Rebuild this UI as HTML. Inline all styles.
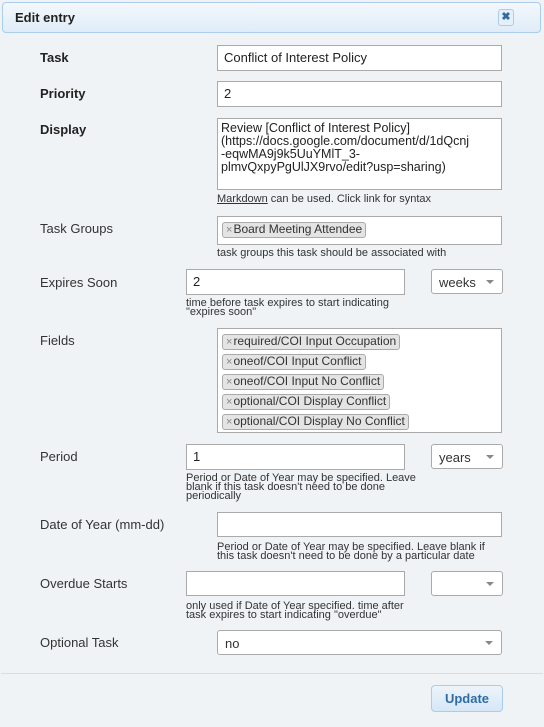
<!DOCTYPE html>
<html><head><style>
*{box-sizing:border-box;margin:0;padding:0}
body{width:544px;height:727px;background:#eff3f6;font-family:"Liberation Sans",sans-serif;font-size:13px;color:#333;position:relative;overflow:hidden}
.a{position:absolute}
.hdr{left:2px;top:2px;width:539px;height:31px;border:1px solid #a9cdea;border-radius:4px;background:linear-gradient(#f4f8fc,#dfecf8)}
.ttl{left:15px;top:10px;font-weight:bold;font-size:13px;color:#222}
.cls{left:498px;top:9px;width:16px;height:17px;border:1px solid #a9cdea;border-radius:3px;background:#e6f0fa;color:#2e6da4;font-size:11px;font-weight:bold;text-align:center;line-height:15px}
.lbl{left:40px;font-size:13px;color:#333}
.b{font-weight:bold;color:#222}
.in{background:#fff;border:1px solid #aaa;padding:4px 6px;font-size:13px;color:#222}
.sel{background:#fff;border:1px solid #aaa;border-radius:3px;padding:5px 7px;font-size:13px;color:#333}
.sel:after{content:"";position:absolute;right:8px;top:10px;border:4px solid transparent;border-top:4px solid #888}
.hint{font-size:11px;line-height:9px;color:#333}
.tag{display:table;height:15px;background:#e4e4e4;border:1px solid #aaa;border-radius:3px;font-size:12px;line-height:13px;padding:0 3px;margin-bottom:4px;color:#333;white-space:nowrap}
.tag i{font-style:normal;color:#888;font-size:11px;margin-right:1px}
</style></head><body>
<div class="a hdr"></div>
<div class="a ttl">Edit entry</div>
<div class="a cls">✖</div>

<div class="a lbl b" style="top:50px">Task</div>
<div class="a in" style="left:217px;top:45px;width:285px;height:26px">Conflict of Interest Policy</div>
<div class="a lbl b" style="top:86px">Priority</div>
<div class="a in" style="left:217px;top:81px;width:285px;height:26px">2</div>
<div class="a lbl b" style="top:122px">Display</div>
<div class="a in" style="left:217px;top:118px;width:285px;height:72px;line-height:13px;padding:3px 3px;font-size:12.5px">Review [Conflict of Interest Policy]<br>(https://docs.google.com/document/d/1dQcnj<br>-eqwMA9j9k5UuYMlT_3-<br>plmvQxpyPgUlJX9rvo/edit?usp=sharing)</div>
<div class="a hint" style="left:217px;top:195px"><u>Markdown</u> can be used. Click link for syntax</div>

<div class="a lbl" style="top:221px">Task Groups</div>
<div class="a in" style="left:217px;top:216px;width:285px;height:29px;padding:5px 4px"><span class="tag"><i>×</i>Board Meeting Attendee</span></div>
<div class="a hint" style="left:217px;top:249px">task groups this task should be associated with</div>

<div class="a lbl" style="top:275px">Expires Soon</div>
<div class="a in" style="left:186px;top:269px;width:219px;height:26px">2</div>
<div class="a sel" style="left:431px;top:269px;width:72px;height:25px">weeks</div>
<div class="a hint" style="left:186px;top:299px">time before task expires to start indicating<br>"expires soon"</div>

<div class="a lbl" style="top:333px">Fields</div>
<div class="a in" style="left:217px;top:328px;width:285px;height:105px;padding:5px 4px 0">
<span class="tag"><i>×</i>required/COI Input Occupation</span>
<span class="tag"><i>×</i>oneof/COI Input Conflict</span>
<span class="tag"><i>×</i>oneof/COI Input No Conflict</span>
<span class="tag"><i>×</i>optional/COI Display Conflict</span>
<span class="tag"><i>×</i>optional/COI Display No Conflict</span></div>

<div class="a lbl" style="top:449px">Period</div>
<div class="a in" style="left:186px;top:444px;width:219px;height:26px">1</div>
<div class="a sel" style="left:431px;top:444px;width:72px;height:25px">years</div>
<div class="a hint" style="left:186px;top:474px">Period or Date of Year may be specified. Leave<br>blank if this task doesn't need to be done<br>periodically</div>

<div class="a lbl" style="top:517px">Date of Year (mm-dd)</div>
<div class="a in" style="left:217px;top:512px;width:285px;height:25px"></div>
<div class="a hint" style="left:217px;top:543px">Period or Date of Year may be specified. Leave blank if<br>this task doesn't need to be done by a particular date</div>

<div class="a lbl" style="top:576px">Overdue Starts</div>
<div class="a in" style="left:186px;top:571px;width:219px;height:25px"></div>
<div class="a sel" style="left:431px;top:571px;width:72px;height:25px"></div>
<div class="a hint" style="left:186px;top:602px">only used if Date of Year specified. time after<br>task expires to start indicating "overdue"</div>

<div class="a lbl" style="top:635px">Optional Task</div>
<div class="a sel" style="left:217px;top:630px;width:285px;height:25px">no</div>

<div class="a" style="left:1px;top:673px;width:542px;height:1px;background:#d8dde2"></div>
<div class="a" style="left:431px;top:685px;width:72px;height:27px;border:1px solid #a9cdea;border-radius:4px;background:linear-gradient(#edf4fb,#d6e7f6);color:#2e6da4;font-weight:bold;text-align:center;line-height:25px;font-size:13px">Update</div>
</body></html>
